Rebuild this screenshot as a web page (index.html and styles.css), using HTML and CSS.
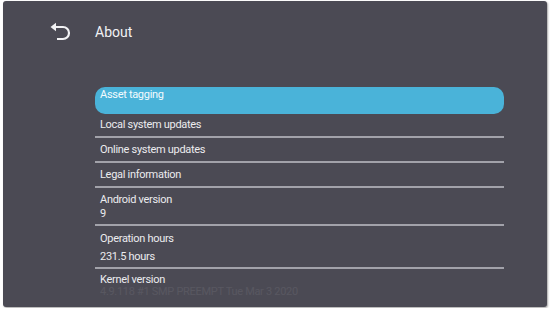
FILE: index.html
```html
<!DOCTYPE html>
<html lang="en">
<head>
    <meta charset="UTF-8">
    <meta name="viewport" content="width=device-width, initial-scale=1.0">
    <title>About</title>
    <link rel="stylesheet" href="styles.css">
</head>
<body>
    <div class="screen">
        <header class="topbar">
            <svg class="back" width="22" height="20" viewBox="0 0 22 20">
                <path d="M4 5 H13 A6 6 0 0 1 13 17 H7" fill="none" stroke="#f2f2f4" stroke-width="2.2"/>
                <path d="M0.5 5 L6 0.8 L6 9.2 Z" fill="#f2f2f4"/>
            </svg>
            <span class="title">About</span>
        </header>

        <div class="list">
            <div class="item focused">Asset tagging</div>
            <div class="item first">Local system updates</div>
            <div class="item">Online system updates</div>
            <div class="item">Legal information</div>
            <div class="item double">
                <div>Android version</div>
                <div class="value">9</div>
            </div>
            <div class="item double wide">
                <div>Operation hours</div>
                <div class="value">231.5 hours</div>
            </div>
            <div class="item last">
                <div>Kernel version</div>
                <div class="value faded">4.9.118 #1 SMP PREEMPT Tue Mar 3 2020</div>
            </div>
        </div>
    </div>
</body>
</html>
```

FILE: styles.css
```css
body {
    margin: 0;
    background: #ffffff;
    font-family: Roboto, "Noto Sans", sans-serif;
}
.screen {
    margin: 1px 3px;
    width: 544px;
    height: 306px;
    background: #4b4a54;
    border-radius: 3px;
    overflow: hidden;
    color: #ececef;
    box-shadow: 1px 1px 2px rgba(0, 0, 0, 0.35);
}
.topbar {
    display: flex;
    align-items: center;
    height: 62px;
    padding-left: 47px;
}
.back {
    margin-right: 23px;
}
.title {
    font-size: 14px;
    color: #f2f2f4;
}
.list {
    margin: 24px 0 0 92px;
    width: 409px;
    font-size: 11px;
    letter-spacing: -0.3px;
}
.item {
    padding: 5px 5px 4px;
    line-height: 14px;
    height: 14px;
    border-bottom: 2px solid #a2a2aa;
}
.item.first {
    padding-top: 4px;
}
.focused {
    height: 24px;
    padding: 1px 5px 2px;
    background: #4ab3d9;
    border: none;
    border-radius: 10px;
    color: #f4fbfe;
}
.double {
    height: 27px;
}
.double .value {
    line-height: 13px;
}
.wide {
    height: 31px;
    padding-top: 6px;
}
.wide .value {
    margin-top: 4px;
}
.last {
    border: none;
    height: auto;
    padding-top: 4px;
}
.faded {
    margin-top: -2px;
    opacity: 0.08;
}
```
